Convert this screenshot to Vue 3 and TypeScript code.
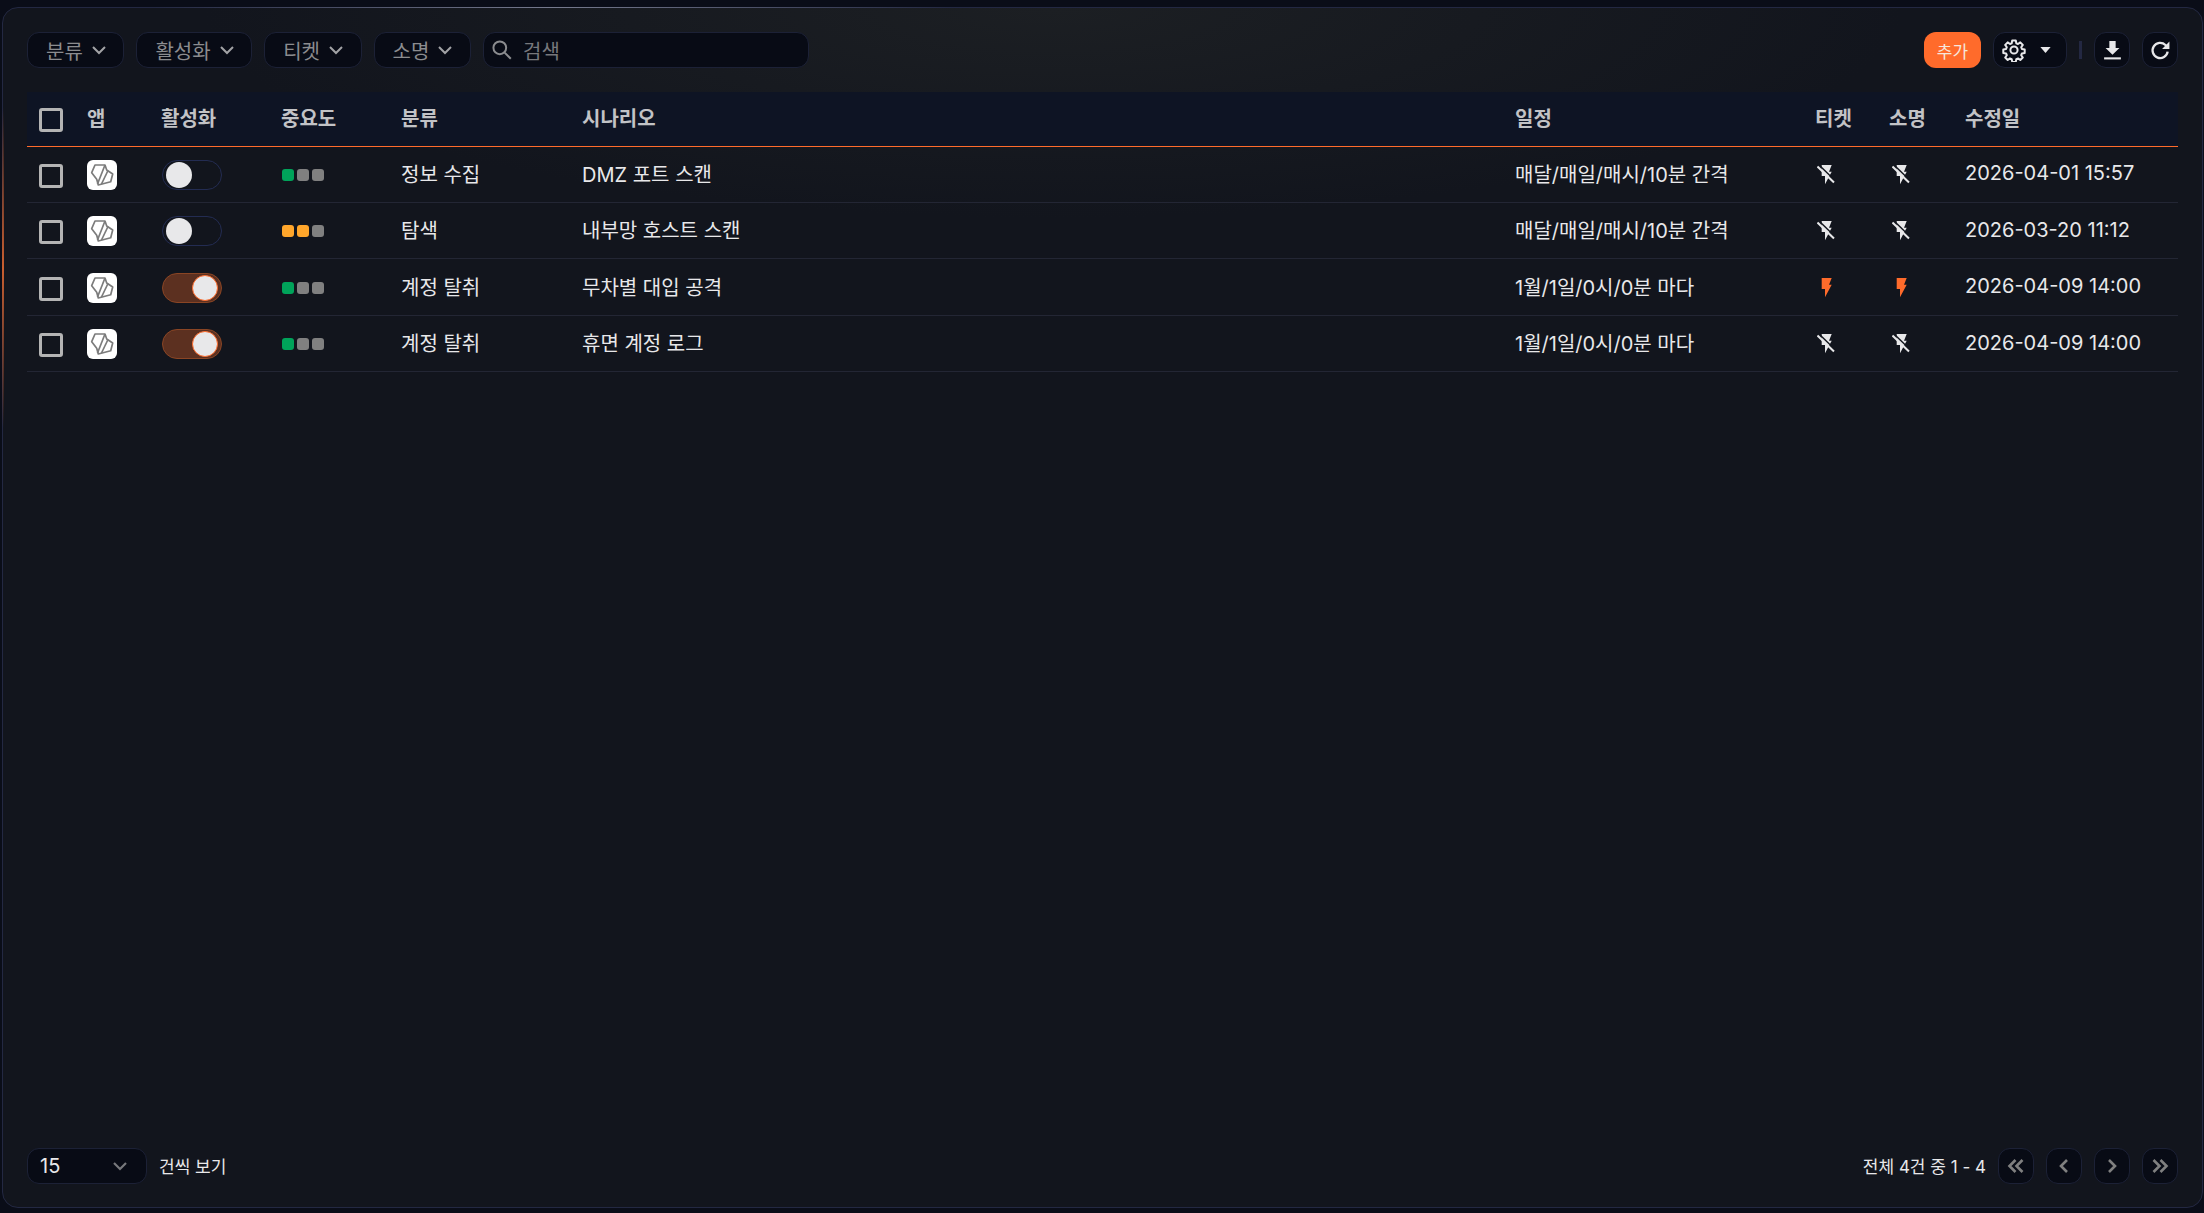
<script setup lang="ts">
type Row = {
  level: number
  color: string
  on: boolean
  category: string
  scenario: string
  schedule: string
  ticket: boolean
  explain: boolean
  updated: string
}

const filters = ['분류', '활성화', '티켓', '소명']

const rows: Row[] = [
  { level: 1, color: '#00a35a', on: false, category: '정보 수집', scenario: 'DMZ 포트 스캔', schedule: '매달/매일/매시/10분 간격', ticket: false, explain: false, updated: '2026-04-01 15:57' },
  { level: 2, color: '#ffa62b', on: false, category: '탐색', scenario: '내부망 호스트 스캔', schedule: '매달/매일/매시/10분 간격', ticket: false, explain: false, updated: '2026-03-20 11:12' },
  { level: 1, color: '#00a35a', on: true, category: '계정 탈취', scenario: '무차별 대입 공격', schedule: '1월/1일/0시/0분 마다', ticket: true, explain: true, updated: '2026-04-09 14:00' },
  { level: 1, color: '#00a35a', on: true, category: '계정 탈취', scenario: '휴면 계정 로그', schedule: '1월/1일/0시/0분 마다', ticket: false, explain: false, updated: '2026-04-09 14:00' },
]
</script>

<template>
  <div class="frame">
    <div class="panel">
      <!-- 상단 툴바 -->
      <div class="toolbar">
        <button v-for="f in filters" :key="f" class="filter">
          {{ f }}
          <svg class="chev" viewBox="0 0 16 16"><path d="M2 5l6 6 6-6" /></svg>
        </button>
        <div class="search">
          <svg class="mag" viewBox="0 0 20 20"><circle cx="8" cy="8" r="5.8" /><path d="M12.4 12.4L18 18" /></svg>
          <span>검색</span>
        </div>
        <div class="spacer"></div>
        <button class="add">추가</button>
        <button class="gear-btn">
          <svg class="gear" viewBox="0 0 24 24">
            <path d="M10.2 2.5h3.6l.5 2.8 1.7.7 2.3-1.6 2.5 2.5-1.6 2.3.7 1.7 2.8.5v3.6l-2.8.5-.7 1.7 1.6 2.3-2.5 2.5-2.3-1.6-1.7.7-.5 2.8h-3.6l-.5-2.8-1.7-.7-2.3 1.6-2.5-2.5 1.6-2.3-.7-1.7-2.8-.5v-3.6l2.8-.5.7-1.7-1.6-2.3 2.5-2.5 2.3 1.6 1.7-.7z" />
            <circle cx="12" cy="12" r="3.6" />
          </svg>
          <svg class="caret" viewBox="0 0 12 7"><path d="M0 0h12L6 7z" /></svg>
        </button>
        <div class="sep"></div>
        <button class="icon-btn">
          <svg class="ico" viewBox="0 0 20 20"><path class="fill" d="M7 1h6v6.500h3.600L10 14 3.400 7.500H7z" /><path class="fill" d="M2 16.500h16v2H2z" /></svg>
        </button>
        <button class="icon-btn refresh">
          <svg class="ico" viewBox="0 0 20 20"><path class="line" d="M16.800 11a7.200 7.200 0 1 1-2.100-6.200L17 7" /><path class="fill" d="M18.500 1.500V8.500h-7z" /></svg>
        </button>
      </div>

      <!-- 테이블 -->
      <div class="table">
        <div class="row head">
          <div><span class="check"></span></div>
          <div>앱</div>
          <div>활성화</div>
          <div>중요도</div>
          <div>분류</div>
          <div>시나리오</div>
          <div>일정</div>
          <div>티켓</div>
          <div>소명</div>
          <div>수정일</div>
        </div>
        <div v-for="(r, i) in rows" :key="i" class="row body">
          <div><span class="check"></span></div>
          <div>
            <span class="app">
              <svg viewBox="0 0 30 30">
                <path d="M8 5h10l1.700 5 6 4-2 7.700L11.300 25l-1.600-5.700-5-6.600z" />
                <path d="M18 5l-7.500 19" />
                <path d="M21 10.500L14.500 24" />
              </svg>
            </span>
          </div>
          <div>
            <span class="toggle" :class="{ on: r.on }"><span class="knob"></span></span>
          </div>
          <div class="dots">
            <i v-for="n in 3" :key="n" :style="n <= r.level ? { background: r.color } : undefined"></i>
          </div>
          <div class="txt">{{ r.category }}</div>
          <div class="txt">{{ r.scenario }}</div>
          <div class="txt">{{ r.schedule }}</div>
          <div>
            <svg class="bolt" :class="{ active: r.ticket }" viewBox="0 0 18 20">
              <path d="M4.700 0H14.700L12 6.700H14.700L8 19.300V11H4.700z" />
              <template v-if="!r.ticket">
                <path class="gap" d="M2 0l16 15.500" />
                <path class="cut" d="M0.500 1.500l16.500 16" />
              </template>
            </svg>
          </div>
          <div>
            <svg class="bolt second" :class="{ active: r.explain }" viewBox="0 0 18 20">
              <path d="M4.700 0H14.700L12 6.700H14.700L8 19.300V11H4.700z" />
              <template v-if="!r.explain">
                <path class="gap" d="M2 0l16 15.500" />
                <path class="cut" d="M0.500 1.500l16.500 16" />
              </template>
            </svg>
          </div>
          <div class="txt">{{ r.updated }}</div>
        </div>
      </div>

      <!-- 하단 페이지네이션 -->
      <div class="footer">
        <div class="size">
          <span>15</span>
          <svg class="chev dim" viewBox="0 0 16 16"><path d="M2 5l6 6 6-6" /></svg>
        </div>
        <span class="per">건씩 보기</span>
        <div class="spacer"></div>
        <span class="total">전체 4건 중 1 - 4</span>
        <button class="page"><svg viewBox="0 0 20 20"><path d="M9.500 4l-6 6 6 6M16.500 4l-6 6 6 6" /></svg></button>
        <button class="page"><svg viewBox="0 0 20 20"><path d="M13 4l-6 6 6 6" /></svg></button>
        <button class="page"><svg viewBox="0 0 20 20"><path d="M7 4l6 6-6 6" /></svg></button>
        <button class="page"><svg viewBox="0 0 20 20"><path d="M3.500 4l6 6-6 6M10.500 4l6 6-6 6" /></svg></button>
      </div>
    </div>
  </div>
</template>

<style>
html, body {
  margin: 0;
  background: #0a0d18;
}
</style>

<style scoped>
.frame {
  box-sizing: border-box;
  width: 2204px;
  height: 1213px;
  padding: 7px 1px 5px 2px;
}

.panel {
  position: relative;
  box-sizing: border-box;
  width: 100%;
  height: 100%;
  display: flex;
  flex-direction: column;
  padding: 24px 24px 23.500px 24px;
  border: 1.500px solid #232842;
  border-radius: 16px;
  background: radial-gradient(ellipse 850px 210px at 1050px 0, #1c1f23 0%, #12151d 100%);
  font-family: Inter, "Noto Sans CJK KR", sans-serif;
  color: #e8e8ea;
  font-size: 20px;
}

/* 테두리 위 하이라이트 */
.panel::before {
  content: '';
  position: absolute;
  top: -1.500px;
  left: 150px;
  width: 800px;
  height: 1.500px;
  background: linear-gradient(90deg, transparent, #767a8e, transparent);
}

.panel::after {
  content: '';
  position: absolute;
  left: -1.500px;
  top: 100px;
  width: 2px;
  height: 320px;
  background: linear-gradient(180deg, transparent, #c95e2f 50%, transparent);
}

button {
  font-family: inherit;
  cursor: pointer;
  padding: 0;
}

.toolbar {
  display: flex;
  align-items: center;
  height: 36px;
  gap: 12px;
}

.spacer {
  flex: 1;
}

.filter {
  box-sizing: border-box;
  height: 36px;
  display: flex;
  align-items: center;
  gap: 8px;
  padding: 0 16.600px 0 18px;
  border: 1px solid #1c2136;
  border-radius: 12px;
  background: #080b15;
  color: #8b8c8f;
  font-size: 20px;
}

.chev {
  width: 16px;
  height: 16px;
  fill: none;
  stroke: #a2a3a6;
  stroke-width: 2;
}

.search {
  box-sizing: border-box;
  width: 326px;
  height: 36px;
  display: flex;
  align-items: center;
  gap: 10px;
  padding-left: 7px;
  border: 1px solid #1c2136;
  border-radius: 12px;
  background: #080b15;
  color: #77787c;
  font-size: 20px;
}

.mag {
  width: 22px;
  height: 22px;
  fill: none;
  stroke: #8b8c8f;
  stroke-width: 1.800;
}

.add {
  width: 57px;
  height: 36px;
  border: none;
  border-radius: 12px;
  background: #ff6b2b;
  color: #f6e6dc;
  font-size: 17px;
}

.gear-btn {
  box-sizing: border-box;
  width: 74px;
  height: 36px;
  display: flex;
  align-items: center;
  padding-left: 8px;
  gap: 14px;
  border: 1px solid #1c2136;
  border-radius: 12px;
  background: #080b15;
}

.gear {
  width: 24px;
  height: 24px;
  fill: none;
  stroke: #e8e8ea;
  stroke-width: 2;
  stroke-linejoin: round;
}

.caret {
  width: 11px;
  height: 6px;
  fill: #e8e8ea;
}

.sep {
  width: 3px;
  height: 18px;
  background: #232842;
}

.icon-btn {
  box-sizing: border-box;
  width: 36px;
  height: 36px;
  display: flex;
  align-items: center;
  justify-content: center;
  border: 1px solid #1c2136;
  border-radius: 12px;
  background: #080b15;
}

.ico {
  width: 21px;
  height: 21px;
}

.ico .fill {
  fill: #e8e8ea;
}

.ico .line {
  fill: none;
  stroke: #e8e8ea;
  stroke-width: 2.200;
}

.table {
  margin-top: 24px;
}

.row {
  display: grid;
  grid-template-columns: 60px 74px 120px 120px 181px 933px 300px 74px 76px 1fr;
  align-items: center;
}

.row > div:first-child {
  padding-left: 12px;
}

.row > div {
  display: flex;
  align-items: center;
}

.head {
  box-sizing: border-box;
  height: 54.500px;
  background: #0e1424;
  border-bottom: 1.500px solid #ff6b2b;
  font-weight: 700;
  color: #c2c3c6;
}

.head > div:not(:first-child) {
  position: relative;
  top: -1px;
}

.body {
  box-sizing: border-box;
  height: 56.400px;
  padding-top: 1.500px;
  border-bottom: 1.500px solid #232634;
}

.txt {
  margin-top: -3px;
}

.check {
  box-sizing: border-box;
  display: block;
  width: 24px;
  height: 24px;
  margin-top: 2px;
  border: 3px solid #b4b4b4;
  border-radius: 3px;
}

.app {
  display: block;
  width: 30px;
  height: 30px;
  border-radius: 6px;
  background: #fff;
}

.app svg {
  display: block;
  width: 30px;
  height: 30px;
  fill: none;
  stroke: #7c7c7c;
  stroke-width: 1.700;
  stroke-linejoin: round;
}

.toggle {
  box-sizing: border-box;
  display: flex;
  align-items: center;
  width: 60px;
  height: 30px;
  margin-left: 1px;
  padding: 0 3px;
  border: 1px solid #232c52;
  border-radius: 15px;
}

.toggle.on {
  justify-content: flex-end;
  background: #5c3020;
  border-color: #8a4524;
}

.knob {
  box-sizing: border-box;
  width: 26px;
  height: 26px;
  border-radius: 50%;
  background: #e8e8ea;
}

.toggle.on .knob {
  border: 1.500px solid #ff6b2b;
}

.dots {
  gap: 3px;
  padding-left: 1px;
}

.dots i {
  display: block;
  width: 12px;
  height: 12px;
  border-radius: 3px;
  background: #808080;
}

.bolt {
  width: 18px;
  height: 20px;
  margin-left: 2px;
  fill: #e8e8ea;
}

.bolt.second {
  margin-left: 3px;
}

.bolt.active {
  fill: #ff6b2b;
}

.gap {
  fill: none;
  stroke: #12151d;
  stroke-width: 1.500;
}

.cut {
  fill: none;
  stroke: #e8e8ea;
  stroke-width: 2;
}

.footer {
  margin-top: auto;
  display: flex;
  align-items: center;
  height: 36px;
  gap: 12px;
}

.size {
  box-sizing: border-box;
  width: 120px;
  height: 36px;
  display: flex;
  align-items: center;
  justify-content: space-between;
  padding: 0 18px 0 12px;
  border: 1px solid #1c2136;
  border-radius: 12px;
  background: #080b15;
  font-size: 20px;
}

.chev.dim {
  stroke: #77787c;
  stroke-width: 2.200;
}

.per,
.total {
  font-size: 17px;
}

.page {
  box-sizing: border-box;
  width: 36px;
  height: 36px;
  display: flex;
  align-items: center;
  justify-content: center;
  border: 1px solid #1c2136;
  border-radius: 12px;
  background: #080b15;
}

.page svg {
  width: 20px;
  height: 20px;
  fill: none;
  stroke: #808080;
  stroke-width: 2.600;
}
</style>
